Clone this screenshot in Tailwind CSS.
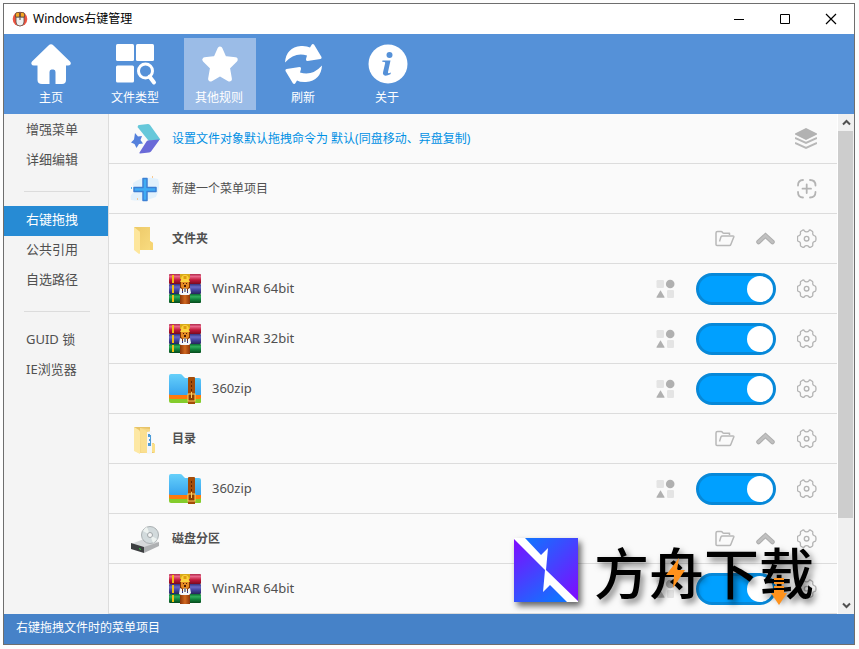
<!DOCTYPE html>
<html lang="zh-CN">
<head>
  <meta charset="UTF-8" />
  <meta name="viewport" content="width=device-width, initial-scale=1" />
  <title>Windows右键管理</title>
  <script src="https://cdn.jsdelivr.net/npm/@tailwindcss/browser@4"></script>
</head>
<body class="bg-[#fdfdfd] h-screen pt-[3px] pl-[3px] pr-1 pb-1 font-['Noto_Sans','Noto_Sans_CJK_SC',sans-serif] text-xs text-[#505050]">

  <!-- Icon sprites -->
  <svg class="absolute size-0" aria-hidden="true">
    <defs>
      <linearGradient id="red" x1="0" y1="0" x2="0" y2="1"><stop offset="0" stop-color="#b02848" /><stop offset=".25" stop-color="#e8668a" /><stop offset=".6" stop-color="#c01838" /><stop offset="1" stop-color="#7a0a1e" /></linearGradient>
      <linearGradient id="blue" x1="0" y1="0" x2="0" y2="1"><stop offset="0" stop-color="#33337c" /><stop offset=".3" stop-color="#6a6ac4" /><stop offset=".6" stop-color="#4444a0" /><stop offset="1" stop-color="#26265c" /></linearGradient>
      <linearGradient id="green" x1="0" y1="0" x2="0" y2="1"><stop offset="0" stop-color="#0a6a30" /><stop offset=".3" stop-color="#2fae5c" /><stop offset=".6" stop-color="#12823c" /><stop offset="1" stop-color="#064a1c" /></linearGradient>
      <linearGradient id="belt" x1="0" y1="0" x2="1" y2="0"><stop offset="0" stop-color="#8a3408" /><stop offset=".5" stop-color="#d26820" /><stop offset="1" stop-color="#8a3408" /></linearGradient>
      <linearGradient id="sky" x1="0" y1="0" x2="0" y2="1"><stop offset="0" stop-color="#66d0fa" /><stop offset="1" stop-color="#37a4ee" /></linearGradient>
      <linearGradient id="fold" x1="0" y1="0" x2="1" y2="1"><stop offset="0" stop-color="#edc968" /><stop offset="1" stop-color="#f9dc80" /></linearGradient>
      <linearGradient id="markA" gradientUnits="userSpaceOnUse" x1="14" y1="4" x2="64" y2="54"><stop offset="0" stop-color="#1470ff" /><stop offset="1" stop-color="#7a10ff" /></linearGradient>
      <linearGradient id="markB" gradientUnits="userSpaceOnUse" x1="0" y1="6" x2="40" y2="62"><stop offset="0" stop-color="#7a10ff" /><stop offset="1" stop-color="#1470ff" /></linearGradient>
    </defs>
    <symbol id="winrar" viewBox="0 0 32 32">
      <rect y="1" width="32" height="10" rx="1" fill="url(#red)" />
      <rect y="11" width="32" height="10" rx="1" fill="url(#blue)" />
      <rect y="21" width="32" height="9" rx="1" fill="url(#green)" />
      <path d="M3 2h2v8H3zM3 12h2v8H3zM3 22h2v7H3z" fill="#f4c010" />
      <rect x="11" y="1" width="10" height="5" fill="#d8a818" />
      <rect x="11" y="8" width="10" height="10" fill="#7c3008" />
      <rect x="11" y="21" width="10" height="10" fill="url(#belt)" />
      <path d="M12 7q0-5 4-5t4 5l1 2H11z" fill="#fbd23c" />
      <path d="M14.500 3h3v3h-3z" fill="#e09a10" />
      <path d="M12 9h8v5l-2 2h-4l-2-2z" fill="#e48a24" />
      <path d="M14 10h1v1h-1zM17 10h1v1h-1zM15 12h2v2h-2z" fill="#4c1c04" />
      <path d="M11 15l2 1v4h1v-4h4v4h1v-4l2-1 1 5-2 2h-8l-2-1z" fill="#f4f4f8" />
      <path d="M15 15h2v4h-2z" fill="#8a8a98" />
    </symbol>
    <symbol id="zip" viewBox="0 0 32 32">
      <path d="M0 22h32v7q0 1-1 1H2q-2 0-2-2z" fill="#84cc2c" />
      <path d="M0 20h32v4q0 2-2 2H2q-2 0-2-2z" fill="#ff7a0c" />
      <path d="M0 3q0-2 2-2h9q2 0 3 2l2 2h14q2 0 2 2v15H2q-2 0-2-1z" fill="url(#sky)" />
      <path d="M19 5q0-1 1-1h5q1 0 1 1v26h-7z" fill="#a44c08" />
      <path d="M22 8h1v2h-1zM22 12h1v2h-1zM22 16h1v2h-1z" fill="#5c2400" />
      <rect x="19" y="21" width="7" height="7" fill="#8c3c00" stroke="#fcd060" />
      <path d="M22 19h1v6h-1z" fill="#fcd060" />
    </symbol>
    <symbol id="folder" viewBox="0 0 32 32">
      <path d="M5 4h16v14l3 2v7H9z" fill="url(#fold)" />
      <path d="M21 18l3 2v7h-3z" fill="#f6d472" />
      <path d="M5 4l5 4q1 0 1 2v20q0 1-1 1l-5-4z" fill="#fde69c" />
    </symbol>
    <symbol id="directory" viewBox="0 0 32 32">
      <path d="M5 4h16v16h4v10H9z" fill="#e8c468" />
      <path d="M11 5l10 1v24H11z" fill="#f5d786" />
      <path d="M18 9l5-1v23h-5z" fill="#f4f6f8" />
      <path d="M19 11h2v3h-2zM20 16h2v2h-2zM19 20h3v3h-3zM21 12h1v8h-1z" fill="#4c9cd8" />
      <path d="M23 20l3 1v9l-3-1z" fill="#fbe08a" />
      <path d="M11 5l5 2q2 1 2 3v20l-6-1z" fill="#fadf90" />
      <path d="M5 4l5 3q1 1 1 2v22l-6-3z" fill="#fde8a4" />
    </symbol>
    <symbol id="disk" viewBox="0 0 32 32">
      <path d="M2 21l13-5 15 3-15 6z" fill="#d6d8da" />
      <path d="M15 24l15-5v4l-15 7z" fill="#aeb0b2" />
      <path d="M2 20l13 4v6L2 26z" fill="#3c3e40" />
      <path d="M10 25l2 1v1l-2-1z" fill="#30d040" />
      <circle cx="21" cy="12" r="8.500" fill="#d2dadc" stroke="#aab0b2" />
      <path d="M21 12l-7-4a8 8 0 0 1 4-4zM21 12l7 4a8 8 0 0 1-4 4z" fill="#edf2f0" />
      <circle cx="21" cy="12" r="2.500" fill="#f6f6f6" stroke="#a0a6a8" />
    </symbol>
    <symbol id="gear" viewBox="0 0 20 20">
      <path d="M5.500 1.200Q6.800.6 7.400 1.800 8 2.800 9.600 2.800T11.800 1.800Q12.400.6 13.700 1.200L15.500 2.400Q16 3 15.700 4.500 15.500 6 17.200 6.700 18.600 7 18.800 8L19 9.700 18.800 11.400Q18.600 12.400 17.200 12.700 15.500 13.400 15.700 15 16 16.400 15.500 17L13.700 18.200Q12.400 18.800 11.800 17.600 11.200 16.600 9.600 16.600T7.400 17.600Q6.800 18.800 5.500 18.200L3.700 17Q3.200 16.400 3.500 15 3.700 13.400 2 12.700.6 12.400.5 11.400L.5 8Q.6 7 2 6.700 3.700 6 3.500 4.500 3.200 3 3.700 2.400z" fill="none" stroke="#b4b4b4" stroke-width="1.300" />
      <circle cx="9.600" cy="9.700" r="2.300" fill="none" stroke="#b4b4b4" stroke-width="1.400" />
    </symbol>
    <symbol id="open" viewBox="0 0 20 20">
      <path d="M3 16.500H2q-1 0-1-1V4q0-1.500 1.500-1.500H6q1 0 1.500.8.500 1 1.500 1h5.500V6M3 16.500h11.500q1 0 1.300-1L18.800 8q.2-1-.8-1H7.500q-1.200 0-1.600 1L4.500 12.500" fill="none" stroke="#b8b8b8" stroke-width="1.500" stroke-linejoin="round" />
    </symbol>
    <symbol id="up" viewBox="0 0 20 20">
      <path d="M2.500 13L9.500 6.500l7 6.500" fill="none" stroke="#adadad" stroke-width="4.500" stroke-linecap="round" />
      <path d="M2.500 13L9.500 6.500l7 6.500" fill="none" stroke="#c0c0c0" stroke-width="2.500" stroke-linecap="round" />
    </symbol>
    <symbol id="shapes" viewBox="0 0 20 20">
      <rect x="1.500" y="1" width="7.500" height="8" rx="1.200" fill="#e4e4e4" />
      <circle cx="15.200" cy="5" r="4.300" fill="#b0b0b0" />
      <path d="M5.500 11.200L9.500 18q.3.700-.4.700H1.900q-.7 0-.4-.7z" fill="#b0b0b0" />
      <rect x="12" y="11" width="7" height="8" rx="1.200" fill="#e4e4e4" />
    </symbol>
  </svg>

  <div class="relative h-full flex flex-col border border-[#6e6e6e] overflow-hidden bg-white">

    <!-- Title bar -->
    <header class="h-[30px] shrink-0 flex items-center bg-white text-black">
      <svg class="size-4 ml-2" viewBox="0 0 16 16">
        <circle cx="8" cy="8" r="7.300" fill="#ee5340" />
        <path d="M4 6h8v5q0 4-4 4t-4-4z" fill="#eef0f0" stroke="#5a4a40" stroke-width=".8" />
        <path d="M3.500 6V3q0-1.500 2-1.500h2V6zM8.500 6V1.500h2q2 0 2 1.500v3z" fill="#f5a623" stroke="#5a4a40" stroke-width=".8" />
        <path d="M8 5v4" stroke="#5a4a40" />
      </svg>
      <h1 class="ml-[5px]">Windows右键管理</h1>
      <div class="ml-auto flex">
        <button class="w-[46px] h-[30px] flex items-center justify-center" aria-label="最小化">
          <svg class="size-3" viewBox="0 0 12 12"><path d="M1 6.500h10" stroke="#000" /></svg>
        </button>
        <button class="w-[46px] h-[30px] flex items-center justify-center" aria-label="最大化">
          <svg class="size-3" viewBox="0 0 12 12"><path d="M1.500 1.500h9v9h-9z" fill="none" stroke="#000" /></svg>
        </button>
        <button class="w-[46px] h-[30px] flex items-center justify-center" aria-label="关闭">
          <svg class="size-3" viewBox="0 0 12 12"><path d="M1 1l10 10M11 1L1 11" stroke="#000" stroke-width="1.200" /></svg>
        </button>
      </div>
    </header>

    <!-- Toolbar -->
    <nav class="h-20 shrink-0 flex items-center gap-3 px-3 bg-[#5591d8] text-white">
      <button class="size-[72px] pt-1 pr-0.5 flex flex-col items-center">
        <svg class="size-11" viewBox="0 0 44 44" fill="#fff"><path d="M19.500 3.500q2.500-2.500 5 0l16.500 16q1.500 1.500.5 3-.8 1-2.500 1h-2V38q0 4-4 4h-6.500V30q0-2.500-2-2.500h-2q-2 0-2 2.500v12H13q-4.500 0-4.500-4V23.500H5q-2 0-2.600-1.500-.4-1.500.6-2.500z" /></svg>
        <span class="leading-6">主页</span>
      </button>
      <button class="size-[72px] pt-1 pr-0.5 flex flex-col items-center">
        <svg class="size-11" viewBox="0 0 44 44" fill="#fff">
          <rect x="3" y="2" width="18" height="17" rx="1.500" /><rect x="23" y="2" width="18" height="17" rx="1.500" /><rect x="3" y="23.500" width="18" height="17" rx="1.500" />
          <circle cx="32.500" cy="29" r="7" fill="none" stroke="#fff" stroke-width="3" />
          <path d="M36.500 34.500l4.500 6" stroke="#fff" stroke-width="4" stroke-linecap="round" />
        </svg>
        <span class="leading-6">文件类型</span>
      </button>
      <button class="size-[72px] pt-1 pr-0.5 flex flex-col items-center bg-[#9bbce7]">
        <svg class="size-11" viewBox="0 0 44 44" fill="#fff" stroke="#fff" stroke-width="5" stroke-linejoin="round"><path d="M23 7l4.200 9.500 11 1.300-7.800 7.700 2 11.500L23 31.500 13.600 37l2-11.500-7.800-7.700 11-1.300z" /></svg>
        <span class="leading-6">其他规则</span>
      </button>
      <button class="size-[72px] pt-1 pr-0.5 flex flex-col items-center">
        <svg class="size-11" viewBox="0 0 44 44" fill="#fff">
          <path d="M4 20.500Q5 5.500 20 4q6-.3 9 1.500L30.500 3q1-1.500 2.500-.5L40.500 15q.6 1.500-1 2L26.500 19q-2 0-1.500-2l1-3.500q-12-4-22 7z" />
          <path d="M4 20.500Q5 5.500 20 4q6-.3 9 1.500L30.500 3q1-1.500 2.500-.5L40.500 15q.6 1.500-1 2L26.500 19q-2 0-1.500-2l1-3.500q-12-4-22 7z" transform="rotate(180 22.500 22)" />
        </svg>
        <span class="leading-6">刷新</span>
      </button>
      <button class="size-[72px] pt-1 pr-0.5 flex flex-col items-center">
        <svg class="size-11" viewBox="0 0 44 44">
          <circle cx="23" cy="22" r="19.500" fill="#fff" />
          <circle cx="24.500" cy="13" r="3" fill="#5591d8" />
          <path d="M17.500 18.500h8L23 30q-.3 1.500 1 1.300l2-.8-.6 1.700q-6 3-7.400-.2-.2-1 .2-2.500l2-8.500q.2-1.200-3-1.300z" fill="#5591d8" />
        </svg>
        <span class="leading-6">关于</span>
      </button>
    </nav>

    <div class="flex-1 min-h-0 flex">

      <!-- Sidebar -->
      <aside class="w-[105px] shrink-0 pt-[2px] bg-[#f4f4f4] border-r border-[#dcdcdc] text-[13px] leading-[26px]">
        <a href="#" class="block h-[30px] pl-[22px]">增强菜单</a>
        <a href="#" class="block h-[30px] pl-[22px]">详细编辑</a>
        <hr class="mt-[15px] mb-[14px] ml-5 mr-[18px] border-[#dcdcdc]" />
        <a href="#" class="block h-[30px] pl-[22px] bg-[#278bd4] text-white">右键拖拽</a>
        <a href="#" class="block h-[30px] pl-[22px]">公共引用</a>
        <a href="#" class="block h-[30px] pl-[22px]">自选路径</a>
        <hr class="mt-[15px] mb-[14px] ml-5 mr-[18px] border-[#dcdcdc]" />
        <a href="#" class="block h-[30px] pl-[22px]">GUID 锁</a>
        <a href="#" class="block h-[30px] pl-[22px]">IE浏览器</a>
      </aside>

      <!-- Menu items -->
      <ul class="flex-1 min-w-0 mr-px overflow-hidden bg-[#fafafa]">
        <li class="h-[50px] pt-px pl-5 pr-5 flex items-center border-b border-[#dcdcdc]">
          <svg class="size-8 mr-[11px]" viewBox="0 0 32 32">
            <path d="M9 3q0-1 1-1l9-1q1 0 2 1l10 14q.5 1-.5 1l-10 1q-1 0-1.500-1L8.500 4z" fill="#66c8da" />
            <path d="M19 17.500l10.500-1q1 0 .5 1l-8 11q-1 1-2 1l-9 1q-1 0-.5-1l7-11q.500-1 1.500-1z" fill="#6a6ad8" />
            <path d="M6 10l3 3.500 4-.5-1.500 4 2.500 3.500-4 .5-2.500 4-2-4L2 19.500l3-3z" fill="#5480dc" />
          </svg>
          <a href="#" class="text-[#0090e4]">设置文件对象默认拖拽命令为 默认(同盘移动、异盘复制)</a>
          <button class="ml-auto" aria-label="图层">
            <svg class="size-[22px]" viewBox="0 0 22 22"><path d="M11 0l11 5.500v1L11 12 0 6.500v-1z" fill="#b2b2b2" /><path d="M0 10l11 5 11-5M0 15l11 5 11-5" fill="none" stroke="#b8b8b8" stroke-width="2" /></svg>
          </button>
        </li>
        <li class="h-[50px] pt-px pl-5 pr-5 flex items-center border-b border-[#dcdcdc]">
          <svg class="size-8 mr-[11px]" viewBox="0 0 32 32">
            <path d="M4 10q10-8 25-4 3 8-2 18-12 5-25 3-2-6 5-9-4-3-3-8z" fill="#e2f1fc" />
            <path d="M14 5.500h4v9h9v4h-9v9h-4v-9H5v-4h9z" fill="#40acf4" stroke="#3c80d4" stroke-width="1.500" stroke-linejoin="round" />
            <path d="M23 3h1v2h-1zM8 25h1v2H8z" fill="#f8c890" />
            <path d="M2 14h1v2H2z" fill="#58b8f0" />
          </svg>
          <span>新建一个菜单项目</span>
          <button class="ml-auto" aria-label="新建">
            <svg class="size-5" viewBox="0 0 20 20" fill="none" stroke="#b4b4b4" stroke-width="1.800" stroke-linecap="round"><path d="M1 6.500Q1 1 6 1M13 1q5.500 0 5.500 5.500M18.500 13q0 5.500-5.500 5.500M6 18.500Q1 18.500 1 13M9.700 5.500v8.500M5.500 9.700h8.500" /></svg>
          </button>
        </li>
        <li class="h-[50px] pt-px pl-5 pr-5 flex items-center border-b border-[#dcdcdc]">
          <svg class="size-8 mr-[11px]"><use href="#folder" /></svg>
          <span class="font-bold">文件夹</span>
          <div class="ml-auto flex items-center gap-[21px]">
            <button aria-label="打开"><svg class="size-5"><use href="#open" /></svg></button>
            <button aria-label="收起"><svg class="size-5"><use href="#up" /></svg></button>
            <button aria-label="设置"><svg class="size-5"><use href="#gear" /></svg></button>
          </div>
        </li>
        <li class="h-[50px] pt-px pl-[60px] pr-5 flex items-center border-b border-[#dcdcdc]">
          <svg class="size-8 mr-[11px]"><use href="#winrar" /></svg>
          <label for="sw1" class="text-[13px]">WinRAR 64bit</label>
          <div class="ml-auto flex items-center gap-[21px]">
            <svg class="size-5"><use href="#shapes" /></svg>
            <input id="sw1" type="checkbox" checked class="appearance-none w-20 h-8 rounded-full border-3 border-[#c0c0c0] bg-[#d8d8d8] checked:border-[#0788d8] checked:bg-[#00a0ff] before:block before:size-[26px] before:rounded-full before:bg-white checked:before:ml-auto" />
            <button aria-label="设置"><svg class="size-5"><use href="#gear" /></svg></button>
          </div>
        </li>
        <li class="h-[50px] pt-px pl-[60px] pr-5 flex items-center border-b border-[#dcdcdc]">
          <svg class="size-8 mr-[11px]"><use href="#winrar" /></svg>
          <label for="sw2" class="text-[13px]">WinRAR 32bit</label>
          <div class="ml-auto flex items-center gap-[21px]">
            <svg class="size-5"><use href="#shapes" /></svg>
            <input id="sw2" type="checkbox" checked class="appearance-none w-20 h-8 rounded-full border-3 border-[#c0c0c0] bg-[#d8d8d8] checked:border-[#0788d8] checked:bg-[#00a0ff] before:block before:size-[26px] before:rounded-full before:bg-white checked:before:ml-auto" />
            <button aria-label="设置"><svg class="size-5"><use href="#gear" /></svg></button>
          </div>
        </li>
        <li class="h-[50px] pt-px pl-[60px] pr-5 flex items-center border-b border-[#dcdcdc]">
          <svg class="size-8 mr-[11px]"><use href="#zip" /></svg>
          <label for="sw3" class="text-[13px]">360zip</label>
          <div class="ml-auto flex items-center gap-[21px]">
            <svg class="size-5"><use href="#shapes" /></svg>
            <input id="sw3" type="checkbox" checked class="appearance-none w-20 h-8 rounded-full border-3 border-[#c0c0c0] bg-[#d8d8d8] checked:border-[#0788d8] checked:bg-[#00a0ff] before:block before:size-[26px] before:rounded-full before:bg-white checked:before:ml-auto" />
            <button aria-label="设置"><svg class="size-5"><use href="#gear" /></svg></button>
          </div>
        </li>
        <li class="h-[50px] pt-px pl-5 pr-5 flex items-center border-b border-[#dcdcdc]">
          <svg class="size-8 mr-[11px]"><use href="#directory" /></svg>
          <span class="font-bold">目录</span>
          <div class="ml-auto flex items-center gap-[21px]">
            <button aria-label="打开"><svg class="size-5"><use href="#open" /></svg></button>
            <button aria-label="收起"><svg class="size-5"><use href="#up" /></svg></button>
            <button aria-label="设置"><svg class="size-5"><use href="#gear" /></svg></button>
          </div>
        </li>
        <li class="h-[50px] pt-px pl-[60px] pr-5 flex items-center border-b border-[#dcdcdc]">
          <svg class="size-8 mr-[11px]"><use href="#zip" /></svg>
          <label for="sw4" class="text-[13px]">360zip</label>
          <div class="ml-auto flex items-center gap-[21px]">
            <svg class="size-5"><use href="#shapes" /></svg>
            <input id="sw4" type="checkbox" checked class="appearance-none w-20 h-8 rounded-full border-3 border-[#c0c0c0] bg-[#d8d8d8] checked:border-[#0788d8] checked:bg-[#00a0ff] before:block before:size-[26px] before:rounded-full before:bg-white checked:before:ml-auto" />
            <button aria-label="设置"><svg class="size-5"><use href="#gear" /></svg></button>
          </div>
        </li>
        <li class="h-[50px] pt-px pl-5 pr-5 flex items-center border-b border-[#dcdcdc]">
          <svg class="size-8 mr-[11px]"><use href="#disk" /></svg>
          <span class="font-bold">磁盘分区</span>
          <div class="ml-auto flex items-center gap-[21px]">
            <button aria-label="打开"><svg class="size-5"><use href="#open" /></svg></button>
            <button aria-label="收起"><svg class="size-5"><use href="#up" /></svg></button>
            <button aria-label="设置"><svg class="size-5"><use href="#gear" /></svg></button>
          </div>
        </li>
        <li class="h-[50px] pt-px pl-[60px] pr-5 flex items-center border-b border-[#dcdcdc]">
          <svg class="size-8 mr-[11px]"><use href="#winrar" /></svg>
          <label for="sw5" class="text-[13px]">WinRAR 64bit</label>
          <div class="ml-auto flex items-center gap-[21px]">
            <svg class="size-5"><use href="#shapes" /></svg>
            <input id="sw5" type="checkbox" checked class="appearance-none w-20 h-8 rounded-full border-3 border-[#c0c0c0] bg-[#d8d8d8] checked:border-[#0788d8] checked:bg-[#00a0ff] before:block before:size-[26px] before:rounded-full before:bg-white checked:before:ml-auto" />
            <button aria-label="设置"><svg class="size-5"><use href="#gear" /></svg></button>
          </div>
        </li>
      </ul>

      <!-- Scrollbar -->
      <div class="w-4 shrink-0 flex flex-col bg-[#f0f0f0]">
        <button class="h-[17px] flex items-center justify-center" aria-label="向上">
          <svg class="w-[9px] h-[7px]" viewBox="0 0 9 7"><path d="M1 5.500L4.500 2 8 5.500" fill="none" stroke="#505050" stroke-width="2" /></svg>
        </button>
        <div class="flex-1 pr-px"><div class="h-[83%] bg-[#cdcdcd]"></div></div>
        <button class="h-[17px] flex items-center justify-center" aria-label="向下">
          <svg class="w-[9px] h-[7px]" viewBox="0 0 9 7"><path d="M1 1.500L4.500 5 8 1.500" fill="none" stroke="#505050" stroke-width="2" /></svg>
        </button>
      </div>
    </div>

    <!-- Status bar -->
    <footer class="h-[30px] shrink-0 px-3 bg-[#4682c8] text-white leading-7">右键拖拽文件时的菜单项目</footer>

    <!-- Watermark -->
    <div class="absolute right-10 bottom-[42px] flex items-center gap-4 pointer-events-none">
      <svg class="size-16 drop-shadow-[3px_4px_3px_rgba(0,0,0,0.6)]" viewBox="0 0 64 64">
        <rect width="64" height="64" fill="#fff" />
        <path d="M11 0H64V63L32 32 34 10 27 17z" fill="url(#markA)" />
        <path d="M0 1L31 32 29 54 36 47 53 64H0z" fill="url(#markB)" />
      </svg>
      <div class="relative">
        <span class="block text-[55px] leading-[64px] font-medium text-black font-['Noto_Sans_CJK_SC',sans-serif] drop-shadow-[3px_4px_3px_rgba(0,0,0,0.5)]">方舟下载</span>
        <svg class="absolute left-[72px] top-5 w-5 h-8" viewBox="0 0 20 32"><path d="M13 0l-2 12h8L7 30l1-13H0z" fill="#ff921c" /></svg>
        <svg class="absolute left-[177px] top-10 w-4 h-7" viewBox="0 0 16 28"><path d="M3 0h10v2H3zM3 4h10v2H3zM3 8h10v2H3zM3 12h10v3h3L8 27 0 15h3z" fill="#ff921c" /></svg>
      </div>
    </div>
  </div>

</body>
</html>
